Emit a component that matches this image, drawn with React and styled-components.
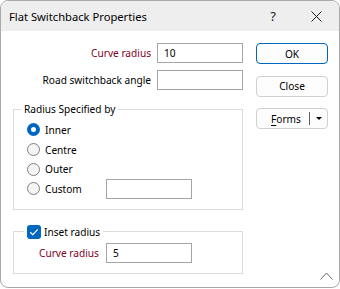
import styled, { createGlobalStyle } from "styled-components";

const GlobalStyle = createGlobalStyle`
  html, body { margin: 0; padding: 0; background: #ffffff; }
  body {
    font-family: "Noto Sans", "Liberation Sans", sans-serif;
    font-size: 10.15px;
    color: #000000;
  }
  * { box-sizing: border-box; }
`;

const Window = styled.div`
  position: relative;
  width: 340px;
  height: 288px;
  border: 1px solid #a9a9a9;
  border-radius: 8px;
  overflow: hidden;
  display: flex;
  flex-direction: column;
  background: #ffffff;
`;

const TitleBar = styled.div`
  height: 30px;
  flex: none;
  background: #eeeeee;
  display: flex;
  align-items: center;
  padding-left: 8px;
`;

const Title = styled.div`
  flex: 1;
  font-size: 11.2px;
`;

const TitleButton = styled.div`
  width: ${p => p.$w}px;
  height: 30px;
  display: flex;
  align-items: center;
  justify-content: center;
  font-size: 13px;
  color: #1a1a1a;
`;

const Body = styled.div`
  flex: 1;
  display: flex;
  gap: 13px;
  padding: 12px 0 0 12px;
`;

const LeftColumn = styled.div`
  width: 230px;
  display: flex;
  flex-direction: column;
`;

const FieldRow = styled.div`
  display: flex;
  align-items: center;
  height: 20px;
  margin-bottom: 7px;
`;

const FieldLabel = styled.label`
  width: 144px;
  padding-right: 6px;
  text-align: right;
  white-space: nowrap;
  color: ${p => (p.$required ? "#800026" : "#000000")};
`;

const TextBox = styled.div`
  width: 86px;
  height: 20px;
  flex: none;
  border: 1px solid #a5a5a5;
  background: #ffffff;
  padding: 0 0 0 6px;
  display: flex;
  align-items: center;
`;

const GroupBox = styled.fieldset`
  margin: ${p => p.$top}px 0 0 0;
  padding: 3px 0 10px 0;
  border: 1px solid #dcdcdc;
  min-width: 0;
`;

const Legend = styled.legend`
  margin-left: ${p => p.$offset}px;
  padding: 0 3px;
  line-height: 16px;
  height: 16px;
  display: flex;
  align-items: center;
  gap: 3px;
`;

const RadioList = styled.div`
  display: flex;
  flex-direction: column;
  padding-left: 13px;
`;

const RadioRow = styled.div`
  display: flex;
  align-items: center;
  height: 19.7px;
`;

const RadioCircle = styled.span`
  width: 13px;
  height: 13px;
  border-radius: 50%;
  flex: none;
  margin-right: 5px;
  border: ${p => (p.$checked ? "4px solid #0067c0" : "1px solid #7f7f7f")};
  background: ${p => (p.$checked ? "#ffffff" : "#f5f5f5")};
`;

const RadioLabel = styled.span`
  width: ${p => p.$w || "auto"};
`;

const CheckBox = styled.span`
  width: 14px;
  height: 14px;
  border-radius: 3px;
  background: #0067c0;
  display: flex;
  align-items: center;
  justify-content: center;
  flex: none;
`;

const InsetRow = styled.div`
  display: flex;
  align-items: center;
  height: 20px;
  gap: 7px;
  padding-left: 25px;
`;

const InsetLabel = styled.span`
  color: #800026;
`;

const RightColumn = styled.div`
  width: 72px;
  display: flex;
  flex-direction: column;
  gap: 11.5px;
`;

const Button = styled.div`
  height: 21px;
  border-radius: 4px;
  border: 1px solid ${p => (p.$primary ? "#0067c0" : "#d0d0d0")};
  background: #fdfdfd;
  display: flex;
  align-items: center;
  justify-content: center;
`;

const SplitButton = styled(Button)`
  justify-content: flex-start;
  padding-left: 14px;
`;

const Underlined = styled.span`
  text-decoration: underline;
  text-underline-offset: 2px;
`;

const Divider = styled.span`
  width: 1px;
  height: 13px;
  background: #5f5f5f;
  margin-left: auto;
  margin-right: 6px;
`;

const Arrow = styled.svg`
  margin-right: 5px;
`;

const Grip = styled.svg`
  position: absolute;
  right: 6px;
  bottom: 7px;
`;

const Check = () => (
  <svg width="10" height="8" viewBox="0 0 10 8">
    <path d="M1.2 4.2 L3.8 6.6 L8.8 1.4" fill="none" stroke="#ffffff" strokeWidth="1.2" />
  </svg>
);

const radios = ["Inner", "Centre", "Outer", "Custom"];

export default function App() {
  return (
    <>
      <GlobalStyle />
      <Window>
        <TitleBar>
          <Title>Flat Switchback Properties</Title>
          <TitleButton $w={40}>?</TitleButton>
          <TitleButton $w={46}>
            <svg width="11" height="11" viewBox="0 0 11 11">
              <path d="M0.5 0.5 L10.5 10.5 M10.5 0.5 L0.5 10.5" stroke="#1a1a1a" strokeWidth="1" />
            </svg>
          </TitleButton>
        </TitleBar>
        <Body>
          <LeftColumn>
            <FieldRow>
              <FieldLabel $required>Curve radius</FieldLabel>
              <TextBox>10</TextBox>
            </FieldRow>
            <FieldRow>
              <FieldLabel>Road switchback angle</FieldLabel>
              <TextBox />
            </FieldRow>
            <GroupBox $top={4}>
              <Legend $offset={7}>Radius Specified by</Legend>
              <RadioList>
                {radios.map((r, i) => (
                  <RadioRow key={r}>
                    <RadioCircle $checked={i === 0} />
                    <RadioLabel $w={r === "Custom" ? "61px" : "auto"}>{r}</RadioLabel>
                    {r === "Custom" && <TextBox />}
                  </RadioRow>
                ))}
              </RadioList>
            </GroupBox>
            <GroupBox $top={14}>
              <Legend $offset={10}>
                <CheckBox><Check /></CheckBox>
                Inset radius
              </Legend>
              <InsetRow>
                <InsetLabel>Curve radius</InsetLabel>
                <TextBox>5</TextBox>
              </InsetRow>
            </GroupBox>
          </LeftColumn>
          <RightColumn>
            <Button $primary>OK</Button>
            <Button>Close</Button>
            <SplitButton>
              <span><Underlined>F</Underlined>orms</span>
              <Divider />
              <Arrow width="6" height="3" viewBox="0 0 6 3">
                <path d="M0 0 L6 0 L3 3 Z" fill="#000000" />
              </Arrow>
            </SplitButton>
          </RightColumn>
        </Body>
        <Grip width="13" height="8" viewBox="0 0 13 8">
          <path d="M0.5 7.5 L6.5 1 L12.5 7.5" fill="none" stroke="#6a6a6a" strokeWidth="1" />
        </Grip>
      </Window>
    </>
  );
}
